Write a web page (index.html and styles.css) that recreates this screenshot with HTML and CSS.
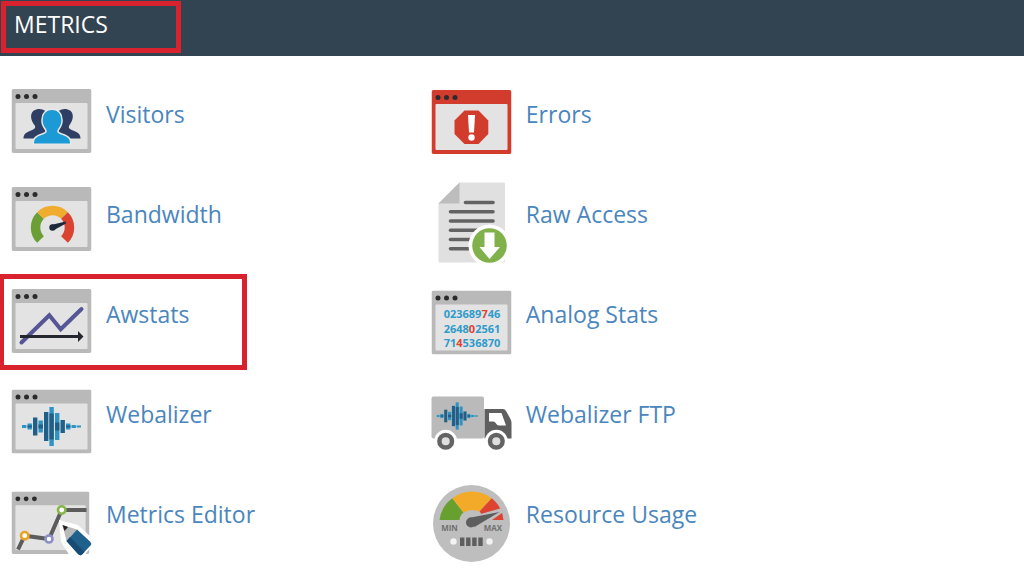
FILE: index.html
```html
<!DOCTYPE html>
<html lang="en">
<head>
    <meta charset="UTF-8">
    <meta name="viewport" content="width=device-width, initial-scale=1.0">
    <title>Metrics</title>
    <link rel="stylesheet" href="styles.css">
</head>
<body>

<!-- Shared icon parts -->
<svg class="sprite" aria-hidden="true">
    <symbol id="window" viewBox="0 0 80 64">
        <rect width="80" height="64" rx="2" fill="currentColor"/>
        <rect x="4" y="14" width="72" height="46" rx="1" fill="#e3e3e3"/>
        <g fill="#2b2b2e">
            <circle cx="6.5" cy="7.5" r="2.5"/>
            <circle cx="15" cy="7.5" r="2.5"/>
            <circle cx="23.5" cy="7.5" r="2.5"/>
        </g>
    </symbol>
    <symbol id="wave" viewBox="0 0 60 40">
        <g fill="#2f94c4">
            <rect x="0" y="18.5" width="4.4" height="3"/>
            <rect x="5.5" y="17" width="4.4" height="6"/>
            <rect x="16.5" y="14" width="4.4" height="12"/>
            <rect x="27.4" y="0.5" width="4.4" height="39"/>
            <rect x="33" y="6.5" width="4.4" height="27"/>
            <rect x="44" y="17" width="4.4" height="6"/>
            <rect x="49.5" y="18.5" width="4.4" height="3"/>
            <rect x="54.6" y="19" width="4.4" height="2"/>
        </g>
        <g fill="#1f5f88">
            <rect x="11" y="11" width="4.4" height="18"/>
            <rect x="22" y="5.5" width="4.4" height="29"/>
            <rect x="38.5" y="13.5" width="4.4" height="13"/>
            <rect x="27.4" y="7" width="4.4" height="26"/>
            <rect x="33" y="16" width="4.4" height="8"/>
            <rect x="16.5" y="18" width="4.4" height="4"/>
            <rect x="5.5" y="19" width="4.4" height="2"/>
            <rect x="44" y="19" width="4.4" height="2"/>
        </g>
    </symbol>
</svg>

<header class="header">
    <h1 class="header-title">METRICS</h1>
</header>

<main class="metrics">
    <a href="#visitors" class="item">
        <svg class="icon" viewBox="0 0 84 84" aria-hidden="true">
            <use href="#window" x="1.5" y="9" width="80" height="64"/>
            <g fill="#2e3f63">
                <path d="M13.5 58.5 C13.5 54 16 52.5 21 50.5 C25 49 26 47.5 24.5 45 C19 38 20 29 29.5 29 C38 29 40 38 35 45 C34 48 35 49 38 50.5 L44 58.5 Z"/>
                <path d="M70.5 58.5 C70.5 54 68 52.5 63 50.5 C59 49 58 47.5 59.5 45 C65 38 64 29 54.5 29 C46 29 44 38 49 45 C50 48 49 49 46 50.5 L40 58.5 Z"/>
            </g>
            <path d="M24 63.5 C24 58 27 56.5 33 54.5 C37 53 37.5 51.5 36 49 C33 45 32 42 33 38 C33.5 33 37 30 42 30 C47 30 50.5 33 51 38 C52 42 51 45 48 49 C46.5 51.5 47 53 51 54.5 C57 56.5 60 58 60 63.5 Z" fill="#1b9ad6" stroke="#e8e8e8" stroke-width="3" paint-order="stroke"/>
        </svg>
        <span class="label">Visitors</span>
    </a>
    <a href="#errors" class="item">
        <svg class="icon window-red" viewBox="0 0 84 84" aria-hidden="true">
            <use href="#window" x="1.5" y="10" width="80" height="64"/>
            <path d="M34.5 30.5 H48.5 L58.3 40.5 V54 L48.5 64 H34.5 L24.5 54 V40.5 Z" fill="#d23c2c"/>
            <path d="M38 35 H45 L44 52.5 H39 Z" fill="#fff"/>
            <circle cx="41.5" cy="57.5" r="3.2" fill="#fff"/>
        </svg>
        <span class="label">Errors</span>
    </a>

    <a href="#bandwidth" class="item">
        <svg class="icon" viewBox="0 0 84 84" aria-hidden="true">
            <use href="#window" x="1.5" y="7" width="80" height="64"/>
            <g fill="none" stroke-width="9.5">
                <path d="M30.5 59.5 A17 17 0 0 1 30.5 35.5" stroke="#6b9f35"/>
                <path d="M30.5 35.5 A17 17 0 0 1 54.5 35.5" stroke="#efac2e"/>
                <path d="M54.5 35.5 A17 17 0 0 1 54.5 59.5" stroke="#d9432f"/>
            </g>
            <path d="M41 45 L55.5 41.5 L56 43.5 L44 50 Z" fill="#1c2a3c"/>
            <circle cx="42.5" cy="47.5" r="3.2" fill="#1c2a3c"/>
        </svg>
        <span class="label">Bandwidth</span>
    </a>
    <a href="#raw-access" class="item">
        <svg class="icon" viewBox="0 0 84 84" aria-hidden="true">
            <path d="M29.5 2.5 H73.5 Q75 2.5 75 4 V81 Q75 82.5 73.5 82.5 H10 Q8.5 82.5 8.5 81 V23.5 Z" fill="#e0e0e0"/>
            <path d="M8.5 23.5 L29.5 2.5 V23.5 Z" fill="#bdbdbd"/>
            <g stroke="#636363" stroke-width="3.6" stroke-linecap="round">
                <path d="M35.5 22.5 H63"/>
                <path d="M20.5 31.7 H63"/>
                <path d="M20.5 41 H63"/>
                <path d="M20.5 50.3 H52"/>
                <path d="M20.5 59.5 H42"/>
                <path d="M20.5 68.7 H40"/>
            </g>
            <circle cx="59.5" cy="65.5" r="21" fill="#fff"/>
            <circle cx="59.5" cy="65.5" r="17.3" fill="#80b14b"/>
            <path d="M54.5 52.5 H64.5 V67 H70 L59.5 79 L49.5 67 H54.5 Z" fill="#fff"/>
        </svg>
        <span class="label">Raw Access</span>
    </a>

    <a href="#awstats" class="item highlighted">
        <svg class="icon" viewBox="0 0 84 84" aria-hidden="true">
            <use href="#window" x="1.5" y="9" width="80" height="64"/>
            <path d="M11.5 62.5 L39.3 35.3 L50.7 49.3 L71.5 29" fill="none" stroke="#565696" stroke-width="4" stroke-linecap="round"/>
            <path d="M10 55 H68 V51 L73.5 56.5 L68 62 V58 H10 Z" fill="#24282e"/>
        </svg>
        <span class="label">Awstats</span>
    </a>
    <a href="#analog-stats" class="item">
        <svg class="icon" viewBox="0 0 84 84" aria-hidden="true">
            <use href="#window" x="1.5" y="10.5" width="80" height="64"/>
            <g class="digits">
                <text x="42" y="38">023689<tspan class="digit-hot">7</tspan>46</text>
                <text x="42" y="53">2648<tspan class="digit-hot">0</tspan>2561</text>
                <text x="42" y="67">71<tspan class="digit-hot">4</tspan>536870</text>
            </g>
        </svg>
        <span class="label">Analog Stats</span>
    </a>

    <a href="#webalizer" class="item">
        <svg class="icon" viewBox="0 0 84 84" aria-hidden="true">
            <use href="#window" x="1.5" y="9.5" width="80" height="64"/>
            <use href="#wave" x="12" y="26.5" width="60" height="40"/>
        </svg>
        <span class="label">Webalizer</span>
    </a>
    <a href="#webalizer-ftp" class="item">
        <svg class="icon" viewBox="0 0 84 84" aria-hidden="true">
            <rect x="1.5" y="16.5" width="52.5" height="42" rx="2" fill="#bababa"/>
            <path d="M54.5 29 H73 Q75 29 76 31 L80.5 39 Q81.5 41 81.5 43 V58.5 H54.5 Z" fill="#5f5f5f"/>
            <path d="M59 33 H71.5 L76 45.5 H69 Q67 45.5 66 43.5 Q65 41.5 63 41.5 H59 Z" fill="#fff"/>
            <use href="#wave" x="6.5" y="22" width="42" height="28"/>
            <g fill="#fff">
                <circle cx="15.7" cy="61.3" r="11.5"/>
                <circle cx="66.3" cy="61.3" r="11.5"/>
            </g>
            <g fill="#dedede" stroke="#636363" stroke-width="4.5">
                <circle cx="15.7" cy="61.3" r="6.3"/>
                <circle cx="66.3" cy="61.3" r="6.3"/>
            </g>
        </svg>
        <span class="label">Webalizer FTP</span>
    </a>

    <a href="#metrics-editor" class="item">
        <svg class="icon" viewBox="0 0 84 84" aria-hidden="true">
            <use href="#window" x="1.5" y="11.5" width="78" height="62.4"/>
            <path d="M8 69.5 L14.7 55.7 L39 59 L51.7 30 H76.5" fill="none" stroke="#5c5c5c" stroke-width="4"/>
            <g fill="#fff" stroke-width="2.6">
                <circle cx="14.7" cy="55.7" r="3.7" stroke="#e9a426"/>
                <circle cx="39" cy="59" r="3.5" stroke="#8b8fc6"/>
                <circle cx="51.7" cy="30" r="3.7" stroke="#85b64b"/>
            </g>
            <path d="M49 40 L68 45 L82 58 L84 64 L70 80 L60 76 L51 62 Z" fill="#fff"/>
            <path d="M52.5 45 L67 49.5 L56.5 61 Z" fill="#b9b9b9"/>
            <path d="M52.5 45 L58 47 L54.5 51 Z" fill="#222"/>
            <path d="M56.5 61 L67 49.5 L80 61.5 Q82 63.5 80.5 65.5 L72 74.5 Q70 76 68 74 Z" fill="#20608d"/>
            <path d="M56.5 61 L60 57 L74.5 72 L72 74.5 Q70 76 68 74 Z" fill="#174b73"/>
        </svg>
        <span class="label">Metrics Editor</span>
    </a>
    <a href="#resource-usage" class="item">
        <svg class="icon" viewBox="0 0 84 84" aria-hidden="true">
            <circle cx="41.5" cy="43.5" r="38.5" fill="#bebebe"/>
            <path d="M9.5 40 A32 32 0 0 1 22.3 18.3 L33.5 32.5 Q30 35 29.5 40 Z" fill="#68a030"/>
            <path d="M22.3 18.3 Q31 11.5 41.5 11.5 Q53 11.5 61.7 18.3 L49.5 31.5 Q41 28 33.5 32.5 Z" fill="#f3aa28"/>
            <path d="M61.7 18.3 A32 32 0 0 1 73.5 40 H53 Q52.5 34 49.5 31.5 Z" fill="#dd4330"/>
            <path d="M35 38.5 L70 28.5 Q73 29.5 72 33 L62 40 L48 50 Z" fill="#bebebe"/>
            <path d="M38.5 38 L69.5 32 L44.5 47 Z" fill="#5e5e5e"/>
            <circle cx="41" cy="42.5" r="5" fill="#5e5e5e"/>
            <g class="gauge-text">
                <text x="19.5" y="51">MIN</text>
                <text x="63" y="51">MAX</text>
            </g>
            <g fill="#f3f3f3">
                <circle cx="23.5" cy="61.5" r="3.2"/>
                <circle cx="59.5" cy="61.5" r="3.2"/>
            </g>
            <path d="M32.2 57.5 V66 M38.3 57.5 V66 M44.4 57.5 V66 M50.5 57.5 V66" stroke="#5e5e5e" stroke-width="4.4"/>
        </svg>
        <span class="label">Resource Usage</span>
    </a>
</main>

</body>
</html>
```

FILE: styles.css
```css
*,
*::after {
    box-sizing: border-box;
}

body {
    margin: 0;
    font-family: "Open Sans", "Noto Sans", sans-serif;
    background-color: #fff;
}

.sprite {
    display: none;
}

.header {
    padding: 1px 1px 3px;
    background-color: #324452;
}

.header-title {
    width: 180px;
    margin: 0;
    padding: 2px 8px 8px;
    border: 5px solid #d8232f;
    color: #fff;
    font-size: 23px;
    font-weight: 400;
    line-height: 32px;
}

.metrics {
    display: grid;
    grid-template-columns: 41fr 59fr;
    row-gap: 16px;
    padding: 24px 0 8px;
}

.item {
    position: relative;
    display: flex;
    align-items: flex-start;
    gap: 12px;
    padding-left: 10px;
    color: #4a86bd;
    text-decoration: none;
}

.item:hover .label {
    text-decoration: underline;
}

.icon {
    width: 84px;
    height: 84px;
    flex-shrink: 0;
    color: #b9b9b9;
}

.window-red {
    color: #d23c2c;
}

.label {
    padding-top: 18px;
    font-size: 23px;
    line-height: 32px;
}

/* red frame around the selected item */
.highlighted::after {
    content: "";
    position: absolute;
    top: -6px;
    left: -1px;
    width: 248px;
    height: 96px;
    border: 5px solid #d8232f;
    pointer-events: none;
}

.digits {
    fill: #2f9bcb;
    font-size: 11px;
    font-weight: 700;
    text-anchor: middle;
}

.digit-hot {
    fill: #dd4330;
}

.gauge-text {
    fill: #707070;
    font-size: 8px;
    font-weight: 700;
    text-anchor: middle;
}
```
